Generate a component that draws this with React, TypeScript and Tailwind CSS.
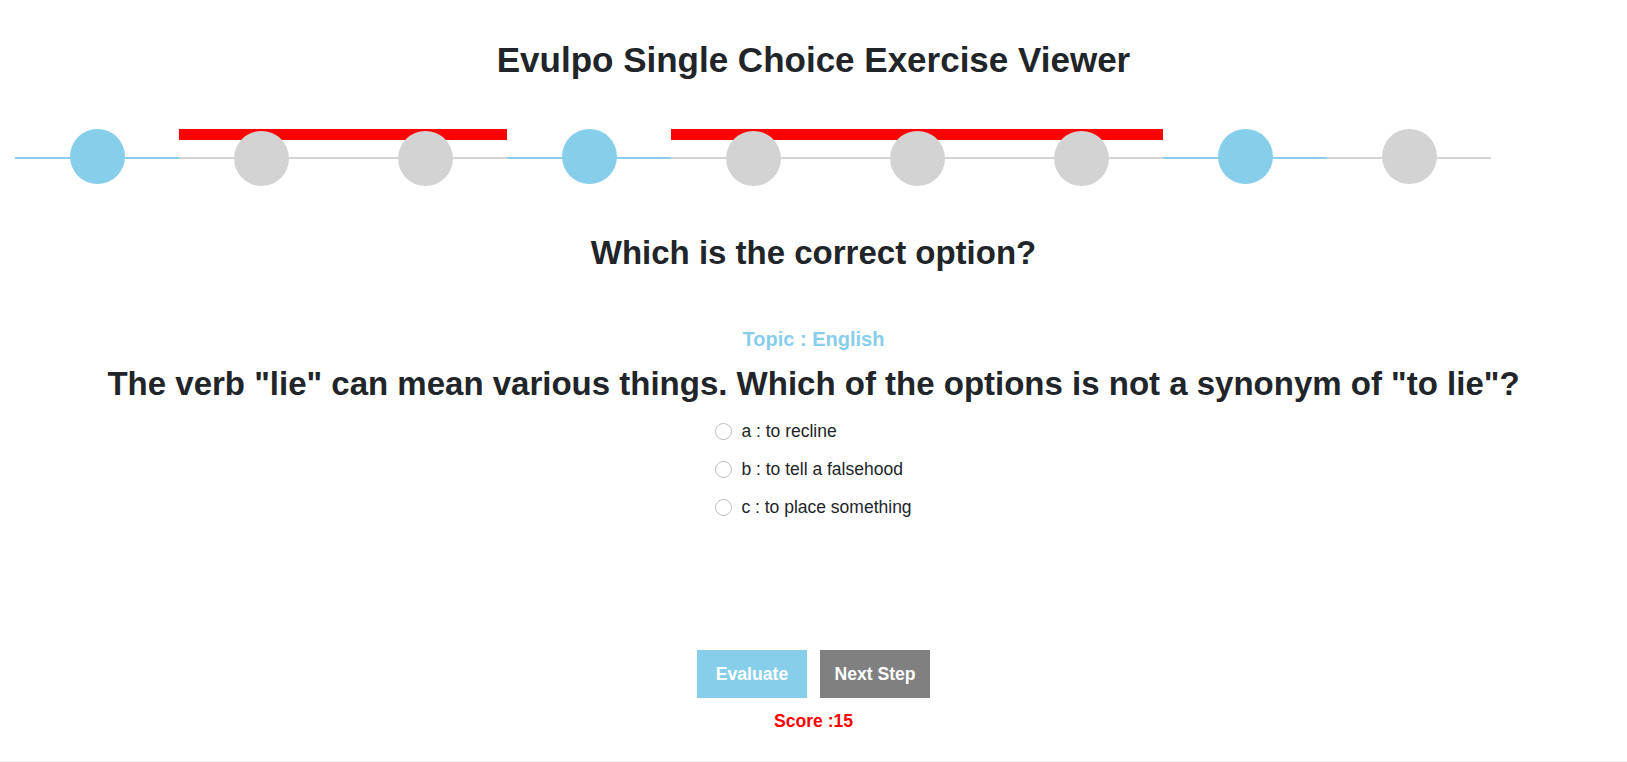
import React from "react";

type Step = { done: boolean; wrong: boolean };

const steps: Step[] = [
  { done: true, wrong: false },
  { done: false, wrong: true },
  { done: false, wrong: true },
  { done: true, wrong: false },
  { done: false, wrong: true },
  { done: false, wrong: true },
  { done: false, wrong: true },
  { done: true, wrong: false },
  { done: false, wrong: false },
];

const options = ["a : to recline", "b : to tell a falsehood", "c : to place something"];

function ProgressStep({ step }: { step: Step }) {
  return (
    <div className="relative flex h-[57px] w-[164px] justify-center">
      <div
        className={
          step.done
            ? "absolute left-0 right-0 top-[28px] h-[2px] bg-[#87ceeb]"
            : "absolute left-0 right-0 top-[28px] h-[2px] bg-[#d3d3d3]"
        }
      />
      {step.wrong && <div className="absolute left-0 right-0 top-0 h-[11px] bg-[#ff0000]" />}
      <div
        className={
          step.done
            ? "relative h-[55px] w-[55px] rounded-full bg-[#87ceeb]"
            : step.wrong
              ? "relative mt-[2px] h-[55px] w-[55px] rounded-full bg-[#d3d3d3]"
              : "relative h-[55px] w-[55px] rounded-full bg-[#d3d3d3]"
        }
      />
    </div>
  );
}

export default function App() {
  return (
    <div className="flex h-[762px] flex-col items-center border-b border-[#eeeeee] bg-white font-['Liberation_Sans',Arial,sans-serif] text-[#212529]">
      <h1 className="pt-[39px] text-[35px] font-bold leading-[42px]">Evulpo Single Choice Exercise Viewer</h1>

      <div className="mt-[48px] flex self-start pl-[15px]">
        {steps.map((s, i) => (
          <ProgressStep key={i} step={s} />
        ))}
      </div>

      <h3 className="mt-[47px] text-[33px] font-bold leading-[39px]">Which is the correct option?</h3>

      <p className="mt-[55px] text-[20px] font-bold leading-[24px] text-[#87ceeb]">Topic : English</p>

      <h2 className="mt-[13px] text-[33px] font-bold leading-[39px]">
        The verb "lie" can mean various things. Which of the options is not a synonym of "to lie"?
      </h2>

      <div className="mt-[9px] flex flex-col">
        {options.map((o) => (
          <label key={o} className="flex h-[38px] items-center text-[17.5px]">
            <span className="mr-[9px] h-[17px] w-[17px] rounded-full border border-[#bcbcbc] bg-white" />
            {o}
          </label>
        ))}
      </div>

      <div className="mt-[124px] flex gap-[13px]">
        <button className="h-[48px] w-[110px] bg-[#87ceeb] text-[17.6px] font-bold text-white">Evaluate</button>
        <button className="h-[48px] w-[110px] bg-[#808080] text-[17.6px] font-bold text-white">Next Step</button>
      </div>

      <p className="mt-[13px] text-[17.6px] font-bold leading-[21px] text-[#ff0000]">Score :15</p>
    </div>
  );
}
